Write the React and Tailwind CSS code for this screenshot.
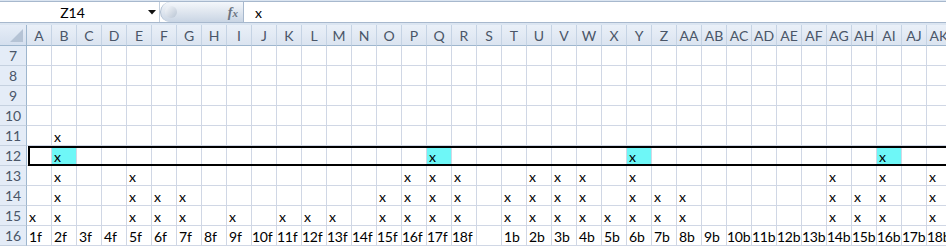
import React from "react";

const COLS = (() => {
  const a = [];
  for (let i = 0; i < 26; i++) a.push(String.fromCharCode(65 + i));
  for (let i = 0; i < 11; i++) a.push("A" + String.fromCharCode(65 + i));
  return a;
})();

const MARKS = {
  11: ["B"],
  12: ["B", "Q", "Y", "AI"],
  13: ["B", "E", "P", "Q", "R", "U", "V", "W", "Y", "AG", "AI", "AK"],
  14: ["B", "E", "F", "G", "O", "P", "Q", "R", "T", "U", "V", "W", "Y", "Z", "AA", "AG", "AH", "AI", "AK"],
  15: ["A", "B", "E", "F", "G", "I", "K", "L", "M", "O", "P", "Q", "R", "T", "U", "V", "W", "X", "Y", "Z", "AA", "AG", "AH", "AI", "AK"],
};
const CYAN = ["B", "Q", "Y", "AI"];

function label16(i) {
  if (i < 18) return `${i + 1}f`;
  if (i === 18) return "";
  return `${i - 18}b`;
}

function Row({ n }) {
  const marks = MARKS[n] || [];
  return (
    <div className="relative flex h-[20px]">
      <div className="flex h-[20px] w-[27px] shrink-0 items-center justify-center border-b border-r border-b-[#c5d1e0] border-r-[#9eb6ce] bg-[#e4ecf7] text-[14px] text-[#4a5668]">
        {n}
      </div>
      {COLS.map((c, i) => {
        const text = n === 16 ? label16(i) : marks.includes(c) ? "x" : "";
        const cyan = n === 12 && CYAN.includes(c);
        const wide = text.length > 2;
        return (
          <div
            key={c}
            className={`flex h-[20px] w-[25px] shrink-0 items-center whitespace-nowrap border-b border-r border-[#d0d7e5] pt-[1px] text-[14px] text-black ${wide ? "pl-0 tracking-[-0.3px]" : "pl-[2px]"} ${cyan ? "bg-[#6ef7f7]" : "bg-white"}`}
          >
            {text}
          </div>
        );
      })}
      {n === 12 && (
        <div className="pointer-events-none absolute left-[28px] top-0 h-[20px] w-[940px] border-2 border-black" />
      )}
    </div>
  );
}

export default function App() {
  return (
    <div className="h-[246px] w-[946px] overflow-hidden bg-white" style={{ fontFamily: "Lato, 'Open Sans', sans-serif" }}>
      {/* formula bar */}
      <div className="h-[25px] bg-[#dbe5f1] pt-[1px]">
        <div className="flex h-[22px] border-y border-[#a7b8cd] bg-white">
          <div className="relative flex h-full w-[160px] shrink-0 items-center border-r border-[#c3cfdd]">
            <span className="w-[145px] text-center text-[14px] text-black">Z14</span>
            <svg className="absolute left-[148px] top-[8px]" width="8" height="5" viewBox="0 0 8 5">
              <polygon points="0,0 8,0 4,4.5" fill="#111" />
            </svg>
          </div>
          <div className="relative flex h-full w-[83px] shrink-0 items-center justify-end rounded-l-full border-l border-[#aebdd0] bg-gradient-to-b from-[#f4f7fb] via-[#dfe6ef] to-[#c9d5e4] pr-[5px]">
            <div className="absolute left-[4px] top-[4px] h-[12px] w-[12px] rounded-full bg-gradient-to-br from-[#f7f9fc] to-[#b8c4d3]" />
            <span className="text-[14px] font-bold italic text-[#6b7480]" style={{ fontFamily: "'Liberation Serif', serif" }}>
              f<span className="text-[11px]">x</span>
            </span>
          </div>
          <div className="flex h-full flex-1 items-center border-l border-[#a7b8cd] pl-[11px] text-[14px] text-black">x</div>
        </div>
      </div>
      {/* column header */}
      <div className="flex h-[21px]">
        <div className="relative h-[21px] w-[27px] shrink-0 border-b border-r border-[#9eb6ce] bg-gradient-to-b from-[#e6edf7] to-[#d4dfee]">
          <svg className="absolute bottom-[3px] right-[3px]" width="13" height="13" viewBox="0 0 13 13">
            <polygon points="13,0 13,13 0,13" fill="#b5c3d5" />
          </svg>
        </div>
        {COLS.map((c) => (
          <div
            key={c}
            className="flex h-[21px] w-[25px] shrink-0 items-center justify-center border-b border-r border-b-[#9eb6ce] border-r-[#c5d3e4] bg-gradient-to-b from-[#eaf0f8] to-[#dbe4f0] text-[14px] text-[#4a5668]"
          >
            {c}
          </div>
        ))}
      </div>
      {[7, 8, 9, 10, 11, 12, 13, 14, 15, 16].map((n) => (
        <Row key={n} n={n} />
      ))}
    </div>
  );
}
